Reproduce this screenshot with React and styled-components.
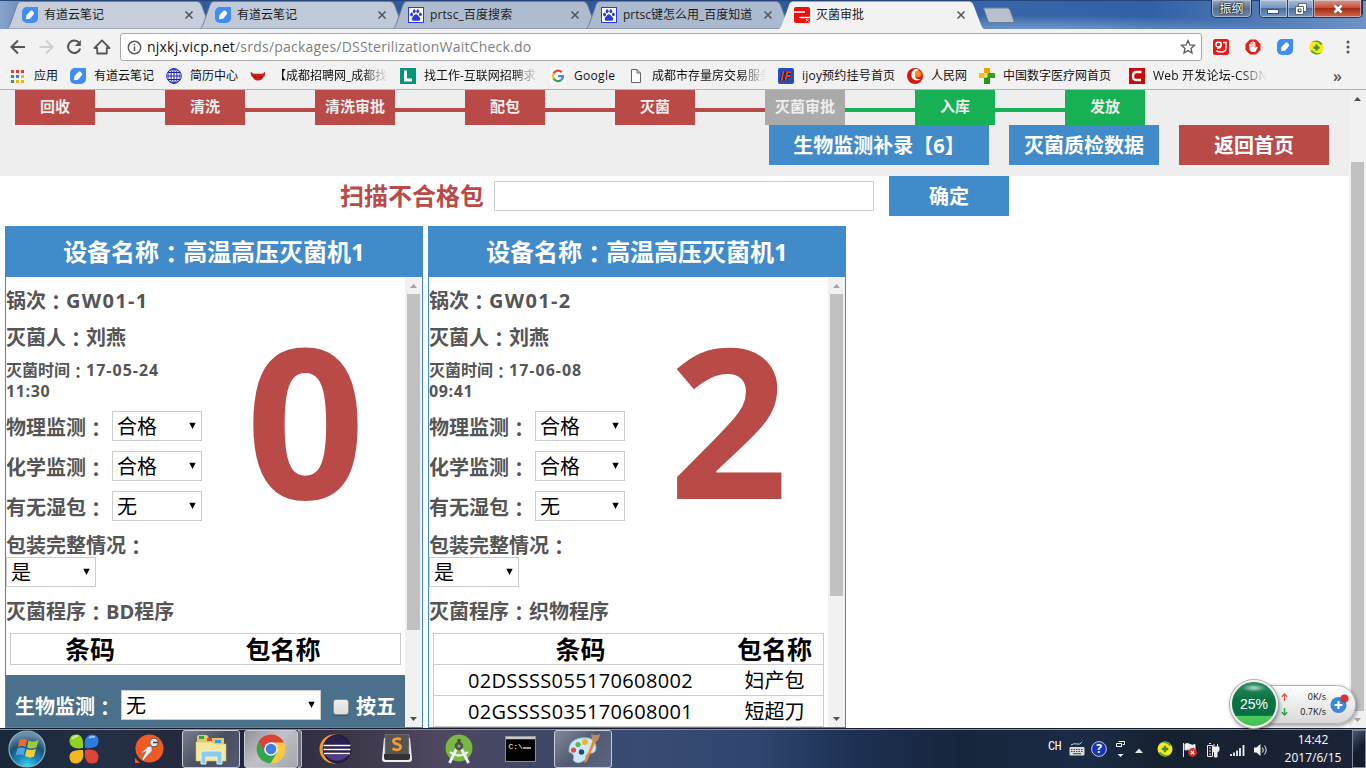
import React from "react";
import styled, { createGlobalStyle, css } from "styled-components";

const uiFont = `"Open Sans", "Noto Sans CJK SC", sans-serif`;

const GlobalStyle = createGlobalStyle`
  * { box-sizing: border-box; }
  svg { flex: none; }
  body { margin: 0; overflow: hidden; font-family: ${uiFont}; background: #fff; }
`;

const Screen = styled.div`
  position: relative;
  width: 1366px;
  height: 768px;
  display: flex;
  flex-direction: column;
  overflow: hidden;
`;

/* ---------- browser tab strip ---------- */
const TabStrip = styled.div`
  flex: none;
  height: 29px;
  display: flex;
  padding-left: 7px;
  align-items: flex-start;
  border-top: 1px solid #24467c;
  background:
    radial-gradient(ellipse 260px 16px at 1040px 30px, #86aedbcc, #86aedb00),
    linear-gradient(90deg, #86a3cb 0, #41679f 60px, #2f5b9c 220px, #2c5a9f 800px, #3766a8 1000px, #3160a6 1150px, #6f93c6 1366px);
`;
const TabBox = styled.div`
  position: relative;
  z-index: ${(p) => (p.$active ? 2 : 1)};
  width: 205px;
  margin-right: -12px;
  height: 28px;
  display: flex;
  align-items: center;
  padding: 0 19px 0 15px;
  font-size: 12px;
  color: #1b1b1b;
  letter-spacing: ${(p) => p.$ls || 0}px;
`;
const TabShape = styled.svg`
  position: absolute;
  inset: 0;
  z-index: -1;
`;
const TabTitle = styled.span`
  flex: 1;
  margin-left: 6px;
  white-space: nowrap;
  line-height: 18px;
`;
const NewTab = styled.svg`
  margin: 6px 0 0 10px;
`;
const WindowButtons = styled.div`
  margin-left: auto;
  display: flex;
  margin-top: -1px;
  padding-right: 3px;
  gap: 7px;
`;
const UserBadge = styled.div`
  width: 41px;
  height: 18px;
  border: 1px solid #1e335a;
  border-top: 0;
  border-radius: 0 0 5px 5px;
  box-shadow: inset 0 0 0 1px #c4d3e6aa;
  background: linear-gradient(#9aa9bf, #5b7192 50%, #6a86ad);
  color: #fff;
  font-size: 12px;
  line-height: 18px;
  text-align: center;
  text-shadow: 0 0 2px #000, 0 0 2px #000;
`;
const WinGroup = styled.div`
  display: flex;
  width: 104px;
  height: 18px;
  border: 1px solid #1e335a;
  border-top: 0;
  border-radius: 0 0 5px 5px;
  overflow: hidden;
`;
const WinButton = styled.div`
  width: ${(p) => p.$w}px;
  display: flex;
  align-items: center;
  justify-content: center;
  box-shadow: inset 0 0 0 1px #d5e2f288;
  border-right: 1px solid #2b4165;
  background: ${(p) =>
    p.$close
      ? "linear-gradient(#d99a8b, #c4503c 45%, #a92a14 50%, #d06a4f)"
      : "linear-gradient(#a9bdd8, #7995bd 45%, #4c6f9f 50%, #7597c4)"};
`;

/* ---------- toolbar ---------- */
const Toolbar = styled.div`
  flex: none;
  height: 36px;
  display: flex;
  align-items: center;
  background: #f2f2f2;
`;
const NavIcons = styled.div`
  width: 120px;
  display: flex;
  padding-left: 8px;
  gap: 8px;
`;
const UrlBox = styled.div`
  width: 1082px;
  height: 28px;
  border: 1px solid #a9a9a9;
  border-radius: 3px;
  background: #fff;
  display: flex;
  align-items: center;
  padding: 0 5px 0 6px;
  font-size: 14px;
  color: #808080;
`;
const UrlText = styled.span`
  flex: 1;
  margin-left: 5px;
  padding-bottom: 2px;
  letter-spacing: ${(p) => p.$ls || 0}px;
  b { font-weight: 400; color: #111; }
`;
const Extensions = styled.div`
  display: flex;
  align-items: center;
  gap: 16px;
  padding-left: 11px;
`;
const MenuButton = styled.span`
  display: flex;
  margin-left: 6px;
`;
const Bookmarks = styled.div`
  flex: none;
  height: 25px;
  display: flex;
  align-items: center;
  padding: 0 0 2px 10px;
  background: #f2f2f2;
  border-bottom: 1px solid #b4b4b4;
  font-size: 12px;
  color: #111;
`;
const BookmarkBox = styled.div`
  flex: none;
  width: ${(p) => p.$w}px;
  display: flex;
  align-items: center;
  gap: 8px;
`;
const BookmarkText = styled.span`
  flex: none;
  white-space: nowrap;
  line-height: 18px;
  letter-spacing: ${(p) => p.$ls || 0}px;
  ${(p) => p.$fade && css`mask-image: linear-gradient(90deg, #000 88px, transparent 114px);`}
`;
const More = styled.span`
  margin-left: 62px;
  font-size: 16px;
  line-height: 16px;
  font-weight: 600;
  color: #555;
`;

/* ---------- page ---------- */
const Viewport = styled.div`
  flex: none;
  height: 638px;
  display: flex;
  background: #fff;
`;
const Page = styled.div`
  width: 1349px;
  overflow: hidden;
`;
const Header = styled.div`
  height: 86px;
  background: #eee;
`;
const Steps = styled.div`
  display: flex;
  align-items: center;
  height: 35px;
  padding-left: 15px;
`;
const tones = { red: "#b94a48", green: "#17b055", gray: "#aaa", blue: "#428bca" };
const Step = styled.div`
  width: 80px;
  height: 35px;
  background: ${(p) => tones[p.$tone]};
  color: #eee;
  font-size: 15px;
  font-weight: 700;
  line-height: 32px;
  text-align: center;
`;
const Link = styled.div`
  width: 70px;
  height: 4px;
  margin-top: 5px;
  background: ${(p) => tones[p.$tone]};
`;
const Actions = styled.div`
  display: flex;
  justify-content: flex-end;
  gap: 20px;
  padding-right: 20px;
`;
const Button = styled.div`
  width: ${(p) => p.$w}px;
  height: 40px;
  background: ${(p) => tones[p.$tone]};
  color: #fff;
  font-size: 20px;
  font-weight: 700;
  line-height: 42px;
  text-align: center;
  white-space: nowrap;
`;
const ScanRow = styled.div`
  display: flex;
  align-items: center;
  height: 40px;
  padding-left: 340px;
`;
const ScanLabel = styled.span`
  width: 154px;
  font-size: 24px;
  font-weight: 700;
  line-height: 40px;
  color: #b94a48;
`;
const ScanInput = styled.div`
  width: 380px;
  height: 30px;
  margin-right: 15px;
  border: 1px solid #ccc;
`;
const Panels = styled.div`
  display: flex;
  gap: 5px;
  padding: 10px 0 0 5px;
`;
const PanelBox = styled.div`
  width: 418px;
  height: 502px;
  border: 1px solid #428bca;
`;
const PanelHead = styled.div`
  height: 50px;
  background: #428bca;
  color: #fff;
  font-size: 24px;
  font-weight: 700;
  line-height: 49px;
  text-align: center;
`;
const PanelView = styled.div`
  display: flex;
  height: 450px;
`;
const PanelBody = styled.div`
  width: 399px;
  height: 450px;
  overflow: hidden;
`;
const Info = styled.div`
  display: flex;
`;
const InfoLeft = styled.div`
  width: 200px;
  height: 356px;
  padding-top: 5px;
  color: #555;
  font-size: 20px;
  font-weight: 700;
  white-space: nowrap;
`;
const Line = styled.div`
  height: ${(p) => p.$h}px;
  line-height: ${(p) => p.$h}px;
  margin-top: ${(p) => p.$mt || 0}px;
`;
const TimeLine = styled.div`
  margin: 4px 0 9px;
  font-size: 16px;
  line-height: 21px;
`;
const Field = styled.div`
  display: flex;
  height: 30px;
  margin-bottom: 10px;
  line-height: 33px;
`;
const FieldLabel = styled.span`
  width: 106px;
`;
const SelectBox = styled.div`
  width: ${(p) => p.$w}px;
  height: 30px;
  display: flex;
  justify-content: space-between;
  padding: 0 5px 0 4px;
  border: 1px solid #ccc;
  background: #fff;
  color: #000;
  font-size: 20px;
  font-weight: 400;
  line-height: 29px;
`;
const Arrow = styled.svg`
  margin-top: 10px;
`;
const BigNumber = styled.div`
  width: 199px;
  height: 293px;
  display: flex;
  align-items: center;
  justify-content: center;
  color: #b94a48;
  font-size: 209px;
  font-weight: 700;
  line-height: 283px;
  padding-bottom: 10px;
`;
const Grid = styled.div`
  width: 391px;
  margin-left: 4px;
  border: 1px solid #ccc;
  border-bottom: 0;
`;
const GridRow = styled.div`
  display: grid;
  grid-template-columns: ${(p) => p.$cols};
  height: 31px;
  border-bottom: 1px solid #ccc;
  text-align: center;
  color: #000;
  font-size: ${(p) => (p.$head ? 25 : 20)}px;
  font-weight: ${(p) => (p.$head ? 700 : 400)};
  line-height: 31px;
  white-space: nowrap;
`;
const Spaced = styled.span`
  letter-spacing: ${(p) => p.$ls || 0}px;
`;
const BioBar = styled.div`
  display: flex;
  align-items: flex-start;
  height: 60px;
  margin-top: 10px;
  padding: 15px 0 0 9px;
  background: #4a708b;
  color: #fff;
  font-size: 20px;
  font-weight: 700;
  line-height: 34px;
`;
const Check = styled.span`
  width: 16px;
  height: 16px;
  margin: 9px 7px 0 12px;
  border: 1px solid #8d8d8d;
  border-radius: 3px;
  background: linear-gradient(#eee, #ddd);
  box-shadow: 0 1px 1px #0004;
`;
const ColonMark = styled.span`
  font-family: "Noto Sans CJK TC", sans-serif;
  line-height: 1;
  vertical-align: -0.1em;
`;
const Track = styled.div`
  width: 17px;
  background: #f1f1f1;
  display: flex;
  flex-direction: column;
  align-items: center;
  justify-content: flex-start;
`;
const Thumb = styled.div`
  width: 13px;
  height: ${(p) => p.$h}px;
  margin: ${(p) => p.$mt || 0}px 0 auto;
  background: #c1c1c1;
`;

/* ---------- floating meter ---------- */
const Meter = styled.div`
  position: absolute;
  left: 1230px;
  top: 680px;
  width: 127px;
  height: 48px;
  display: flex;
  align-items: center;
  z-index: 5;
`;
const MeterBall = styled.div`
  position: relative;
  z-index: 1;
  width: 48px;
  height: 48px;
  border: 2px solid #f1f1f1;
  box-shadow: 0 0 0 1px #aaa, 1px 2px 4px #0008;
  border-radius: 50%;
  background:
    radial-gradient(ellipse 12px 4px at 50% 6px, #ffffffb0, #ffffff00),
    linear-gradient(#2c8d62 0, #09723f 40%, #067044 76%, #4bcc5b 77%, #42bd52 100%);
  color: #fff;
  font: 14px/45px "Liberation Sans", sans-serif;
  text-align: center;
`;
const MeterPill = styled.div`
  width: 102px;
  height: 39px;
  margin-left: -24px;
  padding: 0 6px 0 26px;
  display: flex;
  align-items: center;
  border: 1px solid #b5b5b5;
  border-radius: 0 20px 20px 0;
  box-shadow: 1px 2px 4px #0006;
  background: linear-gradient(#fff, #d9d9d9);
  font-size: 9px;
  color: #111;
`;
const Rates = styled.div`
  width: 46px;
  margin-right: 4px;
  div {
    display: flex;
    align-items: center;
    justify-content: space-between;
    height: 15px;
    line-height: 15px;
  }
`;

/* ---------- taskbar ---------- */
const Taskbar = styled.div`
  flex: none;
  height: 40px;
  position: relative;
  display: flex;
  align-items: center;
  border-top: 1px solid #151d2c;
  box-shadow: inset 0 1px 0 #8791a3;
  background: linear-gradient(90deg, #18283a 0, #252f45 110px, #22253a 240px, #3a3547 340px, #4f4760 440px, #3f4767 540px, #384b74 640px, #2f456f 760px, #1d3052 860px, #17253c 960px, #1b2b45 1090px, #15212f 1160px, #1b2338 1366px);
  color: #fff;
`;
const TaskSlot = styled.div`
  width: ${(p) => p.$w}px;
  height: 38px;
  margin-left: ${(p) => p.$ml || 0}px;
  display: flex;
  align-items: center;
  justify-content: center;
  ${(p) => p.$open && css`
    border: 1px solid #c6cbd6;
    border-radius: 3px;
    background: ${p.$open === "active"
      ? "linear-gradient(135deg, #8e8f99, #c0c0c6 45%, #a5a5ad)"
      : "linear-gradient(135deg, #a5a8b4aa, #5c6274aa 50%, #6d748baa)"};
  `}
`;
const StackEdge = styled.div`
  width: 4px;
  height: 38px;
  border: 1px solid #b9bec9;
  border-left: 0;
  border-radius: 0 3px 3px 0;
  background: #70737f;
`;
const Tray = styled.div`
  margin-left: auto;
  display: flex;
  align-items: center;
  height: 39px;
`;
const LangMark = styled.span`
  width: 21px;
  padding-bottom: 4px;
  font: 12px "Liberation Mono", monospace;
  letter-spacing: -0.7px;
`;
const TraySvg = styled.svg`
  margin-left: ${(p) => p.$ml || 0}px;
  margin-top: ${(p) => p.$mt || 0}px;
`;
const TrayItem = styled.span`
  display: flex;
  margin: 0 0 0 13px;
`;
const Clock = styled.div`
  width: 78px;
  margin-left: 6px;
  font-size: 12px;
  line-height: 18px;
  text-align: center;
`;
const ShowDesktop = styled.div`
  width: 14px;
  height: 38px;
  border: 1px solid #7b879b;
  background: linear-gradient(135deg, #4c5a74, #141c2e 50%);
`;

const withColon = (text) =>
  text.split("：").map((part, i) => (
    <React.Fragment key={i}>
      {i > 0 && <ColonMark>：</ColonMark>}
      {part}
    </React.Fragment>
  ));

/* ---------- icons ---------- */
const NoteIcon = ({ size = 16 }) => (
  <svg width={size} height={size} viewBox="0 0 16 16">
    <path d="M5 0H16V11a5 5 0 0 1-5 5H5a5 5 0 0 1-5-5V5a5 5 0 0 1 5-5Z" fill="#3d8df5" />
    <path d="M4 12.300 4.500 8 8.500 3.800c1.600-.9 4.200 1.500 3.400 3.300L8 11.700Z" fill="#fff" />
  </svg>
);
const BaiduIcon = () => (
  <svg width="16" height="16" viewBox="0 0 16 16">
    <rect x=".5" y=".5" width="15" height="15" fill="#fff" stroke="#2e3bd2" />
    <g fill="#2e3bd2">
      <ellipse cx="3.600" cy="7.500" rx="1.400" ry="1.900" />
      <ellipse cx="6.200" cy="4.200" rx="1.400" ry="2" />
      <ellipse cx="9.800" cy="4.200" rx="1.400" ry="2" />
      <ellipse cx="12.400" cy="7.300" rx="1.400" ry="1.900" />
      <path d="M8 7.200c1.500 0 2.200 1.700 3.400 2.800 1.500 1.400.9 3.800-1 3.800H5.600c-1.900 0-2.500-2.300-1-3.800C5.800 8.900 6.500 7.200 8 7.200Z" />
    </g>
  </svg>
);
const SiteIcon = () => (
  <svg width="16" height="16" viewBox="0 0 16 16">
    <path d="M2 0H14a2 2 0 0 1 2 2V14a2 2 0 0 1-2 2H2a2 2 0 0 1-2-2V2a2 2 0 0 1 2-2Z" fill="#f20d0d" />
    <path d="M0 5H11M5 10.500H16" fill="none" stroke="#fff" strokeWidth="1.600" />
    <path d="m12 12 2.500 2.500M14.500 12 12 14.500" stroke="#fff" />
  </svg>
);
const CloseIcon = () => (
  <svg width="8" height="8" viewBox="0 0 8 8">
    <path d="m.5.500 7 7m0-7-7 7" stroke="#4f545c" strokeWidth="1.500" />
  </svg>
);
const DownArrow = () => (
  <Arrow width="7" height="8" viewBox="0 0 7 8">
    <path d="M.3.800H6.700L3.500 7Z" fill="#000" />
  </Arrow>
);
const BarArrow = ({ down, color = "#505050" }) => (
  <svg width="17" height="17" viewBox="0 0 17 17">
    <path d={down ? "M5 7h7L8.500 11Z" : "M5 11h7L8.500 7Z"} fill={color} />
  </svg>
);
const BackIcon = ({ color = "#555", flip }) => (
  <svg width="20" height="20" viewBox="0 0 20 20">
    <path d={flip ? "M3.500 10H16M10 3.500 16.500 10 10 16.500" : "M17 10H4M10 3.500 3.500 10 10 16.500"} fill="none" stroke={color} strokeWidth="2" />
  </svg>
);
const ReloadIcon = () => (
  <svg width="20" height="20" viewBox="0 0 20 20">
    <path d="M15.200 6A6.200 6.200 0 1 0 16.200 11.500" fill="none" stroke="#555" strokeWidth="2" />
    <path d="M16.800 3V9H10.800Z" fill="#555" />
  </svg>
);
const HomeIcon = () => (
  <svg width="20" height="20" viewBox="0 0 20 20">
    <path d="M2.500 11 10 3.300 17.500 11H14.800V16.500H5.200V11Z" fill="none" stroke="#555" strokeWidth="1.800" strokeLinejoin="round" />
  </svg>
);
const InfoIcon = () => (
  <svg width="15" height="15" viewBox="0 0 15 15">
    <circle cx="7.500" cy="7.500" r="6.200" fill="none" stroke="#5a5a5a" strokeWidth="1.500" />
    <path d="M7.500 6.500V11M7.500 3.800V5.300" stroke="#5a5a5a" strokeWidth="1.600" />
  </svg>
);
const StarIcon = () => (
  <svg width="16" height="16" viewBox="0 0 16 16">
    <path d="m8 1.600 1.900 4.300 4.600.4-3.500 3.100 1 4.600L8 11.600 4 14l1-4.600L1.500 6.300l4.600-.4Z" fill="none" stroke="#5a5a5a" strokeWidth="1.300" />
  </svg>
);
const ExtRed = () => (
  <svg width="16" height="16" viewBox="0 0 16 16">
    <rect width="16" height="16" rx="2.500" fill="#e51c17" />
    <circle cx="5.500" cy="5.500" r="2.500" fill="none" stroke="#fff" strokeWidth="1.400" />
    <path d="M8 3.500V6.500q0 3-4 2.800M10 3.500h3V9q0 4-5 4-4 0-4.500-1.500" fill="none" stroke="#fff" strokeWidth="1.400" />
  </svg>
);
const ExtHand = () => (
  <svg width="16" height="16" viewBox="0 0 16 16">
    <path d="M5 .5h6L15.500 5v6L11 15.500H5L.5 11V5Z" fill="#e0201b" />
    <path d="M4.300 9V4.700h1.400V3h1.500v-.8h1.500V3h1.500v1.700h.2V9l1.600-1.400.8.800L10.300 13H6.300Q4.300 11.500 4.300 9Z" fill="#fff" />
    <path d="M5.900 4v4M7.400 3v5M9 3v5" stroke="#e0201b" strokeWidth=".4" />
  </svg>
);
const SafeIcon = ({ size = 15 }) => (
  <svg width={size} height={size} viewBox="0 0 16 16">
    <circle cx="8" cy="8" r="7.500" fill="#fbe71a" />
    <path d="M2 3.200A7.700 7.700 0 0 1 14.500 4.500L12.600 5Q8-.3 2 3.200ZM14 12.800A7.700 7.700 0 0 1 1.500 11.500L3.400 11Q8 16.300 14 12.800Z" fill="#58a53c" />
    <path d="M8 4.800v6.400M4.800 8h6.400" stroke="#3f8b24" strokeWidth="2.400" />
  </svg>
);
const DotsIcon = () => (
  <svg width="4" height="14" viewBox="0 0 4 14" fill="#555">
    <circle cx="2" cy="2" r="1.500" /><circle cx="2" cy="7" r="1.500" /><circle cx="2" cy="12" r="1.500" />
  </svg>
);
const AppsIcon = () => (
  <svg width="16" height="16" viewBox="0 0 16 16">
    {["#e33b2e", "#e33b2e", "#e33b2e", "#2f9e50", "#3b78e7", "#f4b400", "#2f9e50", "#f4b400", "#f4b400"].map((c, i) => (
      <rect key={i} x={1 + (i % 3) * 5} y={2 + Math.floor(i / 3) * 5} width="3" height="3" fill={c} />
    ))}
  </svg>
);
const GlobeIcon = () => (
  <svg width="16" height="16" viewBox="0 0 16 16" fill="none" stroke="#1a1fb8">
    <circle cx="8" cy="8" r="7.300" fill="#fff" />
    <ellipse cx="8" cy="8" rx="3" ry="7.300" /><ellipse cx="8" cy="8" rx="5.500" ry="7.300" strokeWidth=".6" />
    <path d="M8 1v14M1 8h14M2 4.500h12M2 11.500h12" />
  </svg>
);
const DevilIcon = () => (
  <svg width="16" height="16" viewBox="0 0 16 16">
    <path d="M1 3.500Q2 6 5 5.800H11Q14 6 15 3.500 16 7 13.500 9 12 12.500 8 12.500T2.500 9Q0 7 1 3.500Z" fill="#cf1f1b" />
    <path d="M4 8.500l2.500 1M12 8.500l-2.500 1" stroke="#5a0b0b" />
  </svg>
);
const LIcon = () => (
  <svg width="16" height="16" viewBox="0 0 16 16"><rect width="16" height="16" fill="#00967a" /><path d="M5.500 2.500V12H12" fill="none" stroke="#fff" strokeWidth="3" /></svg>
);
const GoogleIcon = () => (
  <svg width="16" height="16" viewBox="0 0 16 16" fill="none" strokeWidth="2.300">
    <rect width="16" height="16" rx="3" fill="#fff" />
    <path d="M11.800 4.200A5 5 0 0 0 3.600 5.500" stroke="#ea4335" />
    <path d="M3.600 5.500A5 5 0 0 0 3.600 10.500" stroke="#fbbc05" />
    <path d="M3.600 10.500A5 5 0 0 0 11.300 11.900" stroke="#34a853" />
    <path d="M11.300 11.900A5 5 0 0 0 13 8.200H8" stroke="#4285f4" />
  </svg>
);
const FileIcon = () => (
  <svg width="16" height="16" viewBox="0 0 16 16"><path d="M3.500 1.500H9L12.500 5V14.500H3.500ZM9 1.500V5h3.500" fill="#fff" stroke="#666" /></svg>
);
const IjoyIcon = () => (
  <svg width="16" height="16" viewBox="0 0 16 16">
    <rect width="16" height="16" rx="2" fill="#1f4fc4" />
    <path d="M5.500 3 3.500 13M9.500 3l-2 10M9 4.300h4M8.400 8h4" stroke="#0c1233" strokeWidth="3.200" />
    <path d="M5.500 3 3.500 13M9.500 3l-2 10M9 4.300h4M8.400 8h4" stroke="#e8441f" strokeWidth="1.900" />
  </svg>
);
const PeopleIcon = () => (
  <svg width="16" height="16" viewBox="0 0 16 16">
    <circle cx="8" cy="8" r="8" fill="#d5170f" />
    <path d="M8 1Q2 5 5.500 10.500 9 14 14.500 11 9 12 8 8 7.500 4 12 2Q10 .8 8 1Z" fill="#fff" />
    <circle cx="11" cy="6" r="3.300" fill="#f58a1f" />
  </svg>
);
const MedicalIcon = () => (
  <svg width="16" height="16" viewBox="0 0 16 16">
    <path d="M5 0h6v5H5Z" fill="#f3a00a" /><path d="M0 5h8v5H0Z" fill="#f3c21a" />
    <path d="M8 5h8v5H8Z" fill="#2fa51d" /><path d="M5 10h6v6H5Z" fill="#1b9c14" /><path d="M5 5h4v4H5Z" fill="#fff6" />
  </svg>
);
const CIcon = () => (
  <svg width="16" height="16" viewBox="0 0 16 16"><rect width="16" height="16" fill="#c9090b" /><path d="M12.500 4H7Q4.200 4 4 8T7 12h5" fill="none" stroke="#fff" strokeWidth="2.300" /></svg>
);

const StartOrb = () => (
  <svg width="38" height="38" viewBox="0 0 38 38">
    <defs>
      <radialGradient id="orb" cx=".5" cy="1" r=".9">
        <stop offset="0" stopColor="#3fe0f8" /><stop offset=".35" stopColor="#1b88bd" /><stop offset=".7" stopColor="#1d5179" /><stop offset="1" stopColor="#6a8fa8" />
      </radialGradient>
    </defs>
    <circle cx="19" cy="19" r="18" fill="url(#orb)" stroke="#8fb0c2" strokeWidth="1.200" />
    <path d="M11.500 10Q15.500 7.500 19 10L17.500 17Q14 15 9.800 17Z" fill="#ee6a2c" />
    <path d="M20.500 10.500Q25 13 30.500 10L28.500 17.500Q23.500 19.500 19 17.500Z" fill="#9ccc3c" />
    <path d="M9.500 18.500Q13.500 16.500 17.200 18.500L15.500 25.500Q12 23.500 7.500 25.500Z" fill="#4aa6e8" />
    <path d="M18.800 19Q23 21 28 19L26 26.500Q21.500 28.500 17 26Z" fill="#fbcb38" />
  </svg>
);
const PinwheelIcon = () => (
  <svg width="32" height="32" viewBox="0 0 32 32">
    <path d="M15 15Q3 17 1.500 9 1 1 9 1.500 16 2 15 15Z" fill="#8ed224" />
    <path d="M17 15Q15 3 23 1.500 31 1 30.500 9 30 16 17 15Z" fill="#2d7ddd" />
    <path d="M15 17Q17 29 9 30.500 1 31 1.500 23 2 16 15 17Z" fill="#f5b81c" />
    <path d="M17 17Q29 15 30.500 23 31 31 23 30.500 16 30 17 17Z" fill="#dc453a" />
    <path d="M4 6q2-3 6-3M21 5q2-2 6-1" stroke="#ffffff88" strokeWidth="2" fill="none" />
  </svg>
);
const PostmanIcon = () => (
  <svg width="30" height="30" viewBox="0 0 30 30">
    <path d="M1 24V29H6Z" fill="#f15a24" /><circle cx="15.500" cy="14.500" r="14" fill="#f15a24" />
    <circle cx="20" cy="8.500" r="4.300" fill="#e8e8e8" stroke="#555" />
    <path d="M19 8.500h5" stroke="#444" strokeWidth="1.500" />
    <path d="M17 12Q20 17 15 20L9 27 8 25 12 17.500 6 20 14 12.500Z" fill="#ececec" stroke="#666" strokeWidth=".6" />
  </svg>
);
const FolderIcon = () => (
  <svg width="34" height="32" viewBox="0 0 34 32">
    <path d="M3 4Q3 2 5 2h8l2 3h15v22H3Z" fill="#e5c766" />
    <path d="M5 3h5v3H5Z" fill="#22a84a" /><path d="M13 5h5v3h-5Z" fill="#d4493b" /><path d="M21 7h6v3h-6Z" fill="#3b9ae0" />
    <path d="M2 9h17l2 2h11v17H2Z" fill="#f7e79b" stroke="#d9bf64" strokeWidth=".6" />
    <path d="M7 31V20q0-2 2-2h17q2 0 2 2v11h-5v-7H12v7Z" fill="#8ccbe9" stroke="#dff5ff" />
  </svg>
);
const ChromeIcon = () => (
  <svg width="30" height="30" viewBox="0 0 30 30">
    <circle cx="15" cy="15" r="14.500" fill="#fbc843" />
    <path d="M2.500 7.700A14.500 14.500 0 0 1 28 8.500H15L8.700 18.500Z" fill="#d8433a" />
    <path d="M2.500 7.700A14.500 14.500 0 0 0 14.500 29.500L21 18.500 9 18Z" fill="#32a456" />
    <circle cx="15" cy="15" r="6.800" fill="#f5f5f5" /><circle cx="15" cy="15" r="5.300" fill="#3d7fe8" />
  </svg>
);
const EclipseIcon = () => (
  <svg width="33" height="30" viewBox="0 0 33 30">
    <circle cx="15" cy="15" r="14.500" fill="#f29b25" /><circle cx="18" cy="15" r="14" fill="#2b2151" stroke="#16112e" strokeWidth=".8" />
    <path d="M6 21Q18 32 30 21Z" fill="#4f3b90" />
    <path d="M4.500 11.500h27M4.500 15.500h27M5 19.500h26" stroke="#fff" strokeWidth="1.700" />
  </svg>
);
const SublimeIcon = () => (
  <svg width="32" height="30" viewBox="0 0 32 30">
    <path d="M3 4 1 25q0 3 3 3h24q3 0 3-3L29 4Z" fill="#eee" />
    <path d="M6 0h20q2 0 2 2v18q0 2-2 2H6q-2 0-2-2V2q0-2 2-2Z" fill="#555" stroke="#999" strokeWidth=".6" />
    <path d="M3 20h26v4q0 2-2 2H5q-2 0-2-2Z" fill="#333" />
    <path d="M20 5.500Q17 4 14 5.200T13.500 9L18.500 11Q21 13 18.500 15T11.500 14.500" fill="none" stroke="#f49a35" strokeWidth="2.800" />
  </svg>
);
const AndroidIcon = () => (
  <svg width="28" height="32" viewBox="0 0 28 32">
    <circle cx="14" cy="15" r="13.500" fill="#78b843" />
    <path d="M12 15 4.500 30M16 15l7.500 15" stroke="#f0f0f0" strokeWidth="2.800" /><path d="M5 19q9 7 18 0" fill="none" stroke="#f0f0f0" strokeWidth="2.200" />
    <path d="M14 6v5" stroke="#444" strokeWidth="3" /><circle cx="14" cy="13" r="4.300" fill="#4c5350" /><circle cx="14" cy="13" r="1.600" fill="#78b843" />
  </svg>
);
const CmdIcon = () => (
  <svg width="31" height="26" viewBox="0 0 31 26">
    <rect x=".5" y=".5" width="30" height="25" fill="#000" stroke="#8d8d8d" /><path d="M1 2h29" stroke="#c9c9c9" strokeWidth="2.500" />
    <text x="3.500" y="12.500" fill="#fff" fontSize="8" fontFamily="Liberation Mono">C:\</text>
    <path d="M18 12h8" stroke="#fff" strokeWidth="1.200" />
  </svg>
);
const PaintIcon = () => (
  <svg width="34" height="34" viewBox="0 0 34 34">
    <path d="M3 20Q2 8 15 6 29 4 30 15 30 22 24 21 19 22 20 27 12 34 7 28 10 22 3 20Z" fill="#cfe8f7" stroke="#89bfe0" />
    <circle cx="7.500" cy="18" r="2.600" fill="#e34a42" /><circle cx="12" cy="12.500" r="2.600" fill="#57b947" /><circle cx="19" cy="10" r="3" fill="#f5b324" /><circle cx="15.500" cy="20" r="2.700" fill="#234a78" />
    <path d="M27 8 18 31q3-1 4-4L30 9Z" fill="#ef8a2c" /><path d="M25 2q5 2 9 0-1 7-5 8l-3-2Z" fill="#b98a63" />
  </svg>
);

const tabs = [
  { title: "有道云笔记", icon: <NoteIcon />, fill: "#c6cedb" },
  { title: "有道云笔记", icon: <NoteIcon />, fill: "#c0c9d7" },
  { title: "prtsc_百度搜索", icon: <BaiduIcon />, fill: "#afbcd0", ls: 0.1 },
  { title: "prtsc键怎么用_百度知道", icon: <BaiduIcon />, fill: "#acbacf", ls: 0 },
  { title: "灭菌审批", icon: <SiteIcon />, fill: "#f2f2f2", active: true },
];

const Tab = ({ tab }) => (
  <TabBox $active={tab.active} $ls={tab.ls}>
    <TabShape width="205" height="28" viewBox="0 0 205 28">
      <path d="M0 28C2 27 3 24 10 4Q11 .5 14 .5H190Q193 .5 194.500 4C202 24 203 27 205 28Z" fill={tab.fill} stroke={tab.active ? "none" : "#6f7f99"} strokeWidth="1" />
    </TabShape>
    {tab.icon}
    <TabTitle>{tab.title}</TabTitle>
    <CloseIcon />
  </TabBox>
);

const bookmarks = [
  { text: "应用", icon: <AppsIcon />, w: 60 },
  { text: "有道云笔记", icon: <NoteIcon />, w: 96 },
  { text: "简历中心", icon: <GlobeIcon />, w: 84 },
  { text: "【成都招聘网_成都找", icon: <DevilIcon />, w: 150, fade: true },
  { text: "找工作-互联网招聘求", icon: <LIcon />, w: 150, fade: true },
  { text: "Google", icon: <GoogleIcon />, w: 78, ls: 0.3 },
  { text: "成都市存量房交易服务", icon: <FileIcon />, w: 150, fade: true },
  { text: "ijoy预约挂号首页", icon: <IjoyIcon />, w: 129, ls: 0.2 },
  { text: "人民网", icon: <PeopleIcon />, w: 72 },
  { text: "中国数字医疗网首页", icon: <MedicalIcon />, w: 150 },
  { text: "Web 开发论坛-CSDN", icon: <CIcon />, w: 142, fade: true, ls: 0.2 },
];

const steps = [
  ["回收", "red"], ["清洗", "red"], ["清洗审批", "red"], ["配包", "red"],
  ["灭菌", "red"], ["灭菌审批", "gray"], ["入库", "green"], ["发放", "green"],
];

const machines = [
  {
    run: "GW01-1", time: "17-05-24", clock: "11:30", count: 0, program: "BD程序",
    cols: "158px 228px", thumb: 336, rows: [], bio: true,
  },
  {
    run: "GW01-2", time: "17-06-08", clock: "09:41", count: 2, program: "织物程序",
    cols: "293px 95px", thumb: 302,
    rows: [["02DSSSS055170608002", "妇产包"], ["02GSSSS035170608001", "短超刀"]],
  },
];

const Select = ({ value, w = 90 }) => (
  <SelectBox $w={w}>
    <span>{value}</span>
    <DownArrow />
  </SelectBox>
);

const Machine = ({ m }) => (
  <PanelBox>
    <PanelHead>{withColon("设备名称：高温高压灭菌机1")}</PanelHead>
    <PanelView>
      <PanelBody>
        <Info>
          <InfoLeft>
            <Line $h={37}>{withColon("锅次：")}<Spaced $ls={1.35}>{m.run}</Spaced></Line>
            <Line $h={37}>{withColon("灭菌人：刘燕")}</Line>
            <TimeLine>
              {withColon("灭菌时间：")}<Spaced $ls={1}>{m.time}</Spaced>
              <br />
              <Spaced $ls={0.6}>{m.clock}</Spaced>
            </TimeLine>
            {[["物理监测：", "合格"], ["化学监测：", "合格"], ["有无湿包：", "无"]].map(([label, value]) => (
              <Field key={label}>
                <FieldLabel>{withColon(label)}</FieldLabel>
                <Select value={value} />
              </Field>
            ))}
            <Line $h={22} $mt={14}>{withColon("包装完整情况：")}</Line>
            <Select value="是" />
            <Line $h={49}>{withColon(`灭菌程序：${m.program}`)}</Line>
          </InfoLeft>
          <BigNumber>{m.count}</BigNumber>
        </Info>
        <Grid>
          <GridRow $head $cols={m.cols}>
            <span>条码</span>
            <span>包名称</span>
          </GridRow>
          {m.rows.map(([code, name]) => (
            <GridRow key={code} $cols={m.cols}>
              <Spaced $ls={0.35}>{code}</Spaced>
              <span>{name}</span>
            </GridRow>
          ))}
        </Grid>
        {m.bio && (
          <BioBar>
            <FieldLabel>{withColon("生物监测：")}</FieldLabel>
            <Select value="无" w={200} />
            <Check />
            <span>按五</span>
          </BioBar>
        )}
      </PanelBody>
      <Track>
        <BarArrow color="#a3a3a3" />
        <Thumb $h={m.thumb} />
        <BarArrow down />
      </Track>
    </PanelView>
  </PanelBox>
);

export default function App() {
  return (
    <Screen>
      <GlobalStyle />
      <TabStrip>
        {tabs.map((tab, i) => <Tab key={i} tab={tab} />)}
        <NewTab width="34" height="17" viewBox="0 0 34 17">
          <path d="M1.500 1H25Q27 1 28 3L32.500 15.500H8.500Q6.500 15.500 6 14Z" fill="#b6c0cf" stroke="#6a7b97" />
        </NewTab>
        <WindowButtons>
          <UserBadge>振纲</UserBadge>
          <WinGroup>
            <WinButton $w={28}>
              <svg width="12" height="16" viewBox="0 0 12 16"><rect x=".5" y="8.500" width="11" height="4" fill="#fff" stroke="#444e5f" /></svg>
            </WinButton>
            <WinButton $w={27}>
              <svg width="12" height="14" viewBox="0 0 12 14" stroke="#444e5f" strokeWidth=".8"><path d="M3.500 1.500h8v8h-8Z" fill="#fff" /><path d="M.5 4.500h8v8h-8ZM3 7h3v3H3Z" fill="#fff" fillRule="evenodd" /></svg>
            </WinButton>
            <WinButton $w={48} $close>
              <svg width="12" height="12" viewBox="0 0 12 12"><path d="m2.500 2.500 7 7m0-7-7 7" stroke="#555" strokeWidth="4" /><path d="m2.500 2.500 7 7m0-7-7 7" stroke="#fff" strokeWidth="2.500" /></svg>
            </WinButton>
          </WinGroup>
        </WindowButtons>
      </TabStrip>

      <Toolbar>
        <NavIcons>
          <BackIcon />
          <BackIcon flip color="#cfcfcf" />
          <ReloadIcon />
          <HomeIcon />
        </NavIcons>
        <UrlBox>
          <InfoIcon />
          <UrlText $ls={0.22}><b>njxkj.vicp.net</b>/srds/packages/DSSterilizationWaitCheck.do</UrlText>
          <StarIcon />
        </UrlBox>
        <Extensions>
          <ExtRed />
          <ExtHand />
          <NoteIcon />
          <SafeIcon />
          <MenuButton><DotsIcon /></MenuButton>
        </Extensions>
      </Toolbar>
      <Bookmarks>
        {bookmarks.map((b) => (
          <BookmarkBox key={b.text} $w={b.w}>
            {b.icon}
            <BookmarkText $fade={b.fade} $ls={b.ls}>{b.text}</BookmarkText>
          </BookmarkBox>
        ))}
        <More>»</More>
      </Bookmarks>

      <Viewport>
        <Page>
          <Header>
            <Steps>
              {steps.map(([name, tone], i) => (
                <React.Fragment key={name}>
                  {i > 0 && <Link $tone={i > 5 ? "green" : "red"} />}
                  <Step $tone={tone}>{name}</Step>
                </React.Fragment>
              ))}
            </Steps>
            <Actions>
              <Button $w={220} $tone="blue">生物监测补录【6】</Button>
              <Button $w={150} $tone="blue">灭菌质检数据</Button>
              <Button $w={150} $tone="red">返回首页</Button>
            </Actions>
          </Header>
          <ScanRow>
            <ScanLabel>扫描不合格包</ScanLabel>
            <ScanInput />
            <Button $w={120} $tone="blue">确定</Button>
          </ScanRow>
          <Panels>
            {machines.map((m) => <Machine key={m.run} m={m} />)}
          </Panels>
        </Page>
        <Track>
          <BarArrow />
          <Thumb $h={549} $mt={55} />
          <BarArrow down color="#a3a3a3" />
        </Track>
      </Viewport>

      <Taskbar>
        <TaskSlot $w={38} $ml={8}><StartOrb /></TaskSlot>
        <TaskSlot $w={32} $ml={22}><PinwheelIcon /></TaskSlot>
        <TaskSlot $w={30} $ml={34}><PostmanIcon /></TaskSlot>
        <TaskSlot $w={58} $ml={18} $open="idle"><FolderIcon /></TaskSlot>
        <TaskSlot $w={54} $ml={4} $open="active"><ChromeIcon /></TaskSlot>
        <StackEdge />
        <TaskSlot $w={33} $ml={17}><EclipseIcon /></TaskSlot>
        <TaskSlot $w={32} $ml={29}><SublimeIcon /></TaskSlot>
        <TaskSlot $w={28} $ml={32}><AndroidIcon /></TaskSlot>
        <TaskSlot $w={31} $ml={32}><CmdIcon /></TaskSlot>
        <TaskSlot $w={58} $ml={18} $open="idle"><PaintIcon /></TaskSlot>
        <Tray>
          <LangMark>CH</LangMark>
          <TraySvg width="16" height="14" viewBox="0 0 16 14">
            <path d="M2 3q3-2 6-1t5-2" fill="none" stroke="#ccc" /><rect x=".5" y="5" width="15" height="8.500" rx="1" fill="#ddd" />
            <path d="M2 7.500h12M2 9.500h12" stroke="#444" strokeDasharray="1.500 1" /><path d="M4 11.700h8" stroke="#444" />
          </TraySvg>
          <TraySvg $ml={6} width="16" height="16" viewBox="0 0 16 16">
            <circle cx="8" cy="8" r="7.400" fill="#1735b8" stroke="#bac7f2" />
            <text x="8" y="12.300" fill="#fff" fontSize="12" fontWeight="700" textAnchor="middle" fontFamily="Open Sans">?</text>
          </TraySvg>
          <TraySvg $ml={9} width="9" height="18" viewBox="0 0 9 18">
            <path d="M2.500 1.500h6v3h-2M.5 3.500h5v3h-5Z" fill="none" stroke="#fff" /><path d="M1.500 14h6L4.500 17Z" fill="#fff" />
          </TraySvg>
          <TraySvg $ml={10} $mt={4} width="9" height="5" viewBox="0 0 9 5"><path d="M0 5h8L4 .500Z" fill="#e5e5e5" /></TraySvg>
          <TrayItem><SafeIcon size={16} /></TrayItem>
          <TraySvg $ml={9} $mt={2} width="15" height="15" viewBox="0 0 15 15">
            <path d="M1.500 1v14M3 2q3-1 5 .5t5 0V9Q10 10 8 8.500T3 8Z" fill="#eee" stroke="#eee" /><circle cx="10.500" cy="10.500" r="4.400" fill="#d92b20" /><path d="m8.800 8.800 3.400 3.400m0-3.400-3.400 3.400" stroke="#fff" strokeWidth="1.300" />
          </TraySvg>
          <TraySvg $ml={9} $mt={2} width="14" height="16" viewBox="0 0 14 16">
            <path d="M1.500 3.500h5V14.500h-5ZM3 1.500h2M3 6h2M3 9h2M3 12h2" fill="none" stroke="#eee" /><path d="M6.500 5H13V8q-.5 2-2 2.200V15H8.500V10.200q-2-.3-2-2ZM8 2v3M11.500 2v3" fill="#eee" stroke="#eee" />
          </TraySvg>
          <TraySvg $ml={10} $mt={2} width="15" height="12" viewBox="0 0 15 12">
            <path d="M1 12v-2M4 12V8.500M7 12V6.500M10 12V4M13.500 12V1" stroke="#f2f2f2" strokeWidth="1.800" />
          </TraySvg>
          <TraySvg $ml={9} $mt={2} width="14" height="14" viewBox="0 0 14 14">
            <path d="M0 4.500h2.500L6.500 1v12l-4-3.500H0Z" fill="#f2f2f2" /><path d="M8.500 4.500q1.500 2.500 0 5M10.500 2.500q3.300 4.500 0 9" fill="none" stroke="#f2f2f2" />
          </TraySvg>
          <Clock>14:42<br />2017/6/15</Clock>
          <ShowDesktop />
        </Tray>
      </Taskbar>

      <Meter>
        <MeterBall>25%</MeterBall>
        <MeterPill>
          <Rates>
            <div>
              <svg width="7" height="8" viewBox="0 0 7 8"><path d="M3.500 8V1M.8 3.700 3.500 1l2.700 2.700" fill="none" stroke="#e8543f" strokeWidth="1.400" /></svg>
              0K/s
            </div>
            <div>
              <svg width="7" height="8" viewBox="0 0 7 8"><path d="M3.500 0v7M.8 4.300 3.500 7l2.700-2.700" fill="none" stroke="#27a045" strokeWidth="1.400" /></svg>
              0.7K/s
            </div>
          </Rates>
          <svg width="19" height="20" viewBox="0 0 19 20">
            <circle cx="8.500" cy="11" r="8" fill="#3b86dd" /><path d="M8.500 7v8M4.500 11h8" stroke="#fff" strokeWidth="2" /><circle cx="14.500" cy="4.500" r="3.800" fill="#df3236" stroke="#a62222" strokeWidth=".5" />
          </svg>
        </MeterPill>
      </Meter>
    </Screen>
  );
}
